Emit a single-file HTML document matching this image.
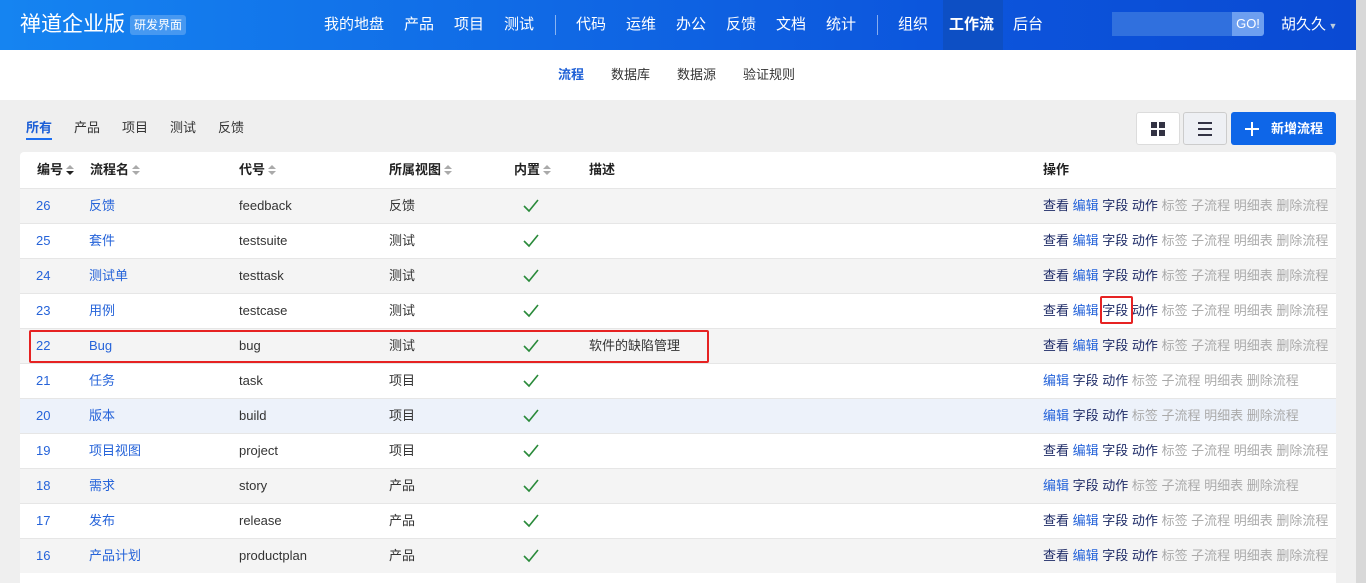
<!DOCTYPE html>
<html><head><meta charset="utf-8"><style>
*{margin:0;padding:0;box-sizing:border-box}
html,body{width:1366px;height:583px;overflow:hidden}
body{background:#efefef;font-family:"Liberation Sans","Noto Sans CJK SC",sans-serif;font-size:13px;color:#333;position:relative}
span{white-space:nowrap}
.nav{position:absolute;left:0;top:0;width:1356px;height:50px;background:linear-gradient(90deg,#1584f1,#0c55dc 70%,#0a4ad3)}
.nav span{position:absolute;top:0;line-height:50px;color:#fff;font-size:15px}
.logo{left:20px;font-size:21px!important}
.badge{position:absolute;left:130px;top:15px;height:20px;padding:0 4px;line-height:20px;background:rgba(255,255,255,.22);border-radius:3px;color:#fff;font-size:12px}
.sep{position:absolute;top:15px;width:1px;height:20px;background:rgba(255,255,255,.5)}
.sub{position:absolute;left:0;top:50px;width:1356px;height:50px;background:#fff}
.sub span{position:absolute;top:0;line-height:50px;font-size:13px;color:#333}
.tabs span{position:absolute;top:117px;font-size:13px;color:#333}
.panel{position:absolute;left:20px;top:152px;width:1316px;height:431px;background:#fff;border-radius:4px 4px 0 0}
.row{position:absolute;left:0;width:1316px;height:35px;border-top:1px solid #e6e6e6}
.row span{position:absolute;top:0;line-height:34px;font-size:13px}
.row span span{position:static}
.b{color:#2563d9}.g{color:#aaa}.n{color:#1d2a66}
.hd>span{position:absolute;top:0;line-height:36px;font-weight:bold;font-size:13px;color:#222}
.hd svg{vertical-align:-2px;margin-left:3px}
</style></head><body>
<div class="nav">
<span class="logo">禅道企业版</span><div class="badge">研发界面</div>
<span style="left:324px">我的地盘</span><span style="left:404px">产品</span><span style="left:454px">项目</span><span style="left:504px">测试</span>
<div class="sep" style="left:555px"></div>
<span style="left:576px">代码</span><span style="left:626px">运维</span><span style="left:676px">办公</span><span style="left:726px">反馈</span><span style="left:776px">文档</span><span style="left:826px">统计</span>
<div class="sep" style="left:877px"></div>
<span style="left:898px">组织</span>
<div style="position:absolute;left:943px;top:0;width:60px;height:50px;background:#0d4fc4"></div>
<span style="left:949px;font-weight:bold">工作流</span><span style="left:1013px">后台</span>
<div style="position:absolute;left:1112px;top:12px;width:120px;height:24px;background:#3070de"></div>
<div style="position:absolute;left:1232px;top:12px;width:32px;height:24px;background:#6d9ff0;border-radius:0 3px 3px 0;color:#fff;font-size:13px;line-height:24px;text-align:center">GO!</div>
<span style="left:1281px">胡久久<small style="font-size:9px;color:#bcd"> ▼</small></span>
</div>
<div style="position:absolute;left:1356px;top:0;width:10px;height:583px;background:#d8d8d8"></div>
<div class="sub"><span style="left:558px;color:#1d5fd6;font-weight:bold">流程</span><span style="left:611px">数据库</span><span style="left:677px">数据源</span><span style="left:743px">验证规则</span></div>
<div class="tabs"><span style="left:26px;color:#1d5fd6;font-weight:bold">所有</span><span style="left:74px">产品</span><span style="left:122px">项目</span><span style="left:170px">测试</span><span style="left:218px">反馈</span></div>
<div style="position:absolute;left:26px;top:138px;width:26px;height:2px;background:#1d6ef0"></div>
<div style="position:absolute;left:1136px;top:112px;width:44px;height:33px;background:#fff;border:1px solid #dcdcdc;border-radius:3px"><svg width="44" height="33" style="position:absolute;left:-1px;top:-1px"><rect x="15" y="10" width="6" height="6" fill="#334"/><rect x="23" y="10" width="6" height="6" fill="#334"/><rect x="15" y="18" width="6" height="6" fill="#334"/><rect x="23" y="18" width="6" height="6" fill="#334"/></svg></div>
<div style="position:absolute;left:1183px;top:112px;width:44px;height:33px;background:#eef0f4;border:1px solid #ccc;border-radius:3px"><svg width="44" height="33" style="position:absolute;left:-1px;top:-1px"><path d="M15 11h14M15 17h14M15 23h14" stroke="#334" stroke-width="2"/></svg></div>
<div style="position:absolute;left:1231px;top:112px;width:105px;height:33px;background:#0e66e8;border-radius:3px;color:#fff;font-weight:bold;line-height:33px;font-size:13px"><svg width="16" height="16" style="position:absolute;left:13px;top:9px"><path d="M8 1v14M1 8h14" stroke="#fff" stroke-width="2"/></svg><span style="position:absolute;left:40px">新增流程</span></div>
<div class="panel">
<div class="hd">
<span style="left:17px">编号<svg width="8" height="12"><path d="M0 5L4 1L8 5Z" fill="#aaa"/><path d="M0 7L4 11L8 7Z" fill="#222"/></svg></span>
<span style="left:70px">流程名<svg width="8" height="12"><path d="M0 5L4 1L8 5Z M0 7L4 11L8 7Z" fill="#aaa"/></svg></span>
<span style="left:219px">代号<svg width="8" height="12"><path d="M0 5L4 1L8 5Z M0 7L4 11L8 7Z" fill="#aaa"/></svg></span>
<span style="left:369px">所属视图<svg width="8" height="12"><path d="M0 5L4 1L8 5Z M0 7L4 11L8 7Z" fill="#aaa"/></svg></span>
<span style="left:494px">内置<svg width="8" height="12"><path d="M0 5L4 1L8 5Z M0 7L4 11L8 7Z" fill="#aaa"/></svg></span>
<span style="left:569px">描述</span><span style="left:1023px">操作</span></div>
</div>
<div id="rows"></div>
<div style="position:absolute;left:29px;top:330px;width:680px;height:33px;border:2px solid #e62222;border-radius:2px"></div>
<div style="position:absolute;left:1100px;top:296px;width:33px;height:28px;border:2px solid #e62222;border-radius:2px"></div>
<script>
var d=[[26,"反馈","feedback","反馈",1],[25,"套件","testsuite","测试",1],[24,"测试单","testtask","测试",1],[23,"用例","testcase","测试",1],[22,"Bug","bug","测试",1,"软件的缺陷管理"],[21,"任务","task","项目",0],[20,"版本","build","项目",0],[19,"项目视图","project","项目",1],[18,"需求","story","产品",0],[17,"发布","release","产品",1],[16,"产品计划","productplan","产品",1]];
var h="";
var ck='<svg width="16" height="14" style="position:absolute;left:503px;top:10px"><path d="M1 7L6 12L15 1" stroke="#2a8a3a" stroke-width="1.6" fill="none"/></svg>';
d.forEach(function(r,i){var top=188+i*35;var bg=i==6?"#edf2fa":(i%2==0?"#f4f4f4":"#fff");
var ops='<span style="left:1023px">'+(r[4]?'<span class="n">查看</span> ':'')+'<span class="b">编辑</span> <span class="n">字段</span> <span class="n">动作</span> <span class="g">标签 子流程 明细表 删除流程</span></span>';
h+='<div class="row" style="left:20px;top:'+top+'px;background:'+bg+'"><span class="b" style="left:16px">'+r[0]+'</span><span class="b" style="left:69px">'+r[1]+'</span><span style="left:219px">'+r[2]+'</span><span style="left:369px">'+r[3]+'</span>'+ck+(r[5]?'<span style="left:569px">'+r[5]+'</span>':'')+ops+'</div>';});
document.getElementById("rows").innerHTML=h;
</script>
</body></html>
